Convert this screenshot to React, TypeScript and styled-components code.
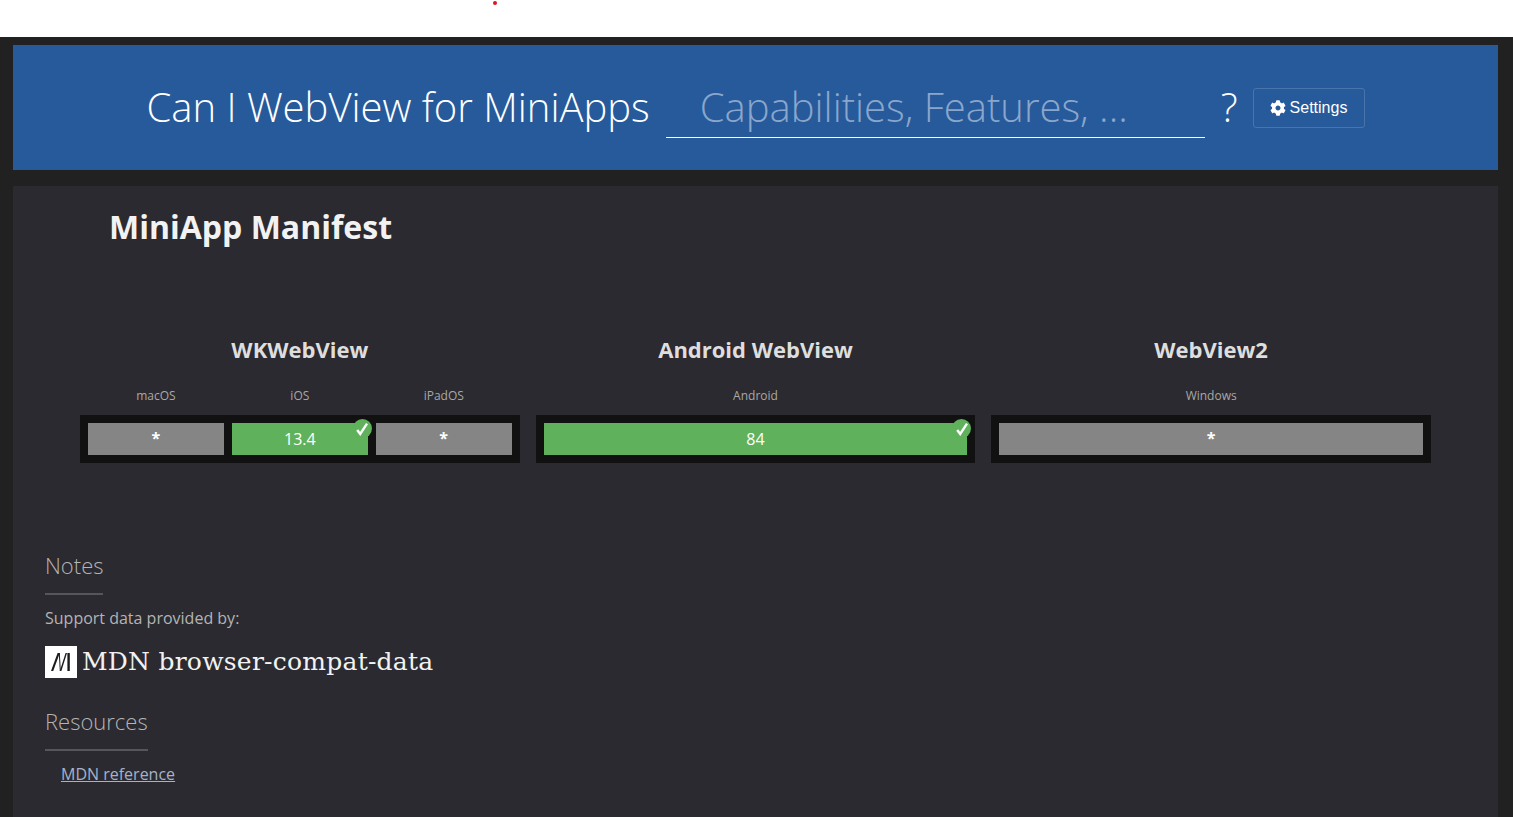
import styled, { createGlobalStyle } from "styled-components";
import { FaCog } from "react-icons/fa";

const GlobalStyle = createGlobalStyle`
  html, body {
    margin: 0;
    height: 100%;
    overflow: hidden;
    background: #212121;
    font-family: "Open Sans", sans-serif;
  }
`;

const engines = [
  {
    name: "WKWebView",
    platforms: [
      { os: "macOS", version: "*", supported: false },
      { os: "iOS", version: "13.4", supported: true },
      { os: "iPadOS", version: "*", supported: false },
    ],
  },
  {
    name: "Android WebView",
    platforms: [{ os: "Android", version: "84", supported: true }],
  },
  {
    name: "WebView2",
    platforms: [{ os: "Windows", version: "*", supported: false }],
  },
];

const App = () => {
  return (
    <>
      <GlobalStyle />
      <TopStrip>
        <RedDot />
      </TopStrip>
      <Page>
        <SearchPanel>
          <Title>Can I WebView for MiniApps</Title>
          <SearchInput placeholder="Capabilities, Features, ..." />
          <Question>?</Question>
          <SettingsButton>
            <FaCog size={16} />
            Settings
          </SettingsButton>
        </SearchPanel>
        <Content>
          <FeatureName>MiniApp Manifest</FeatureName>
          <Engines>
            {engines.map((engine) => (
              <Engine key={engine.name}>
                <EngineName>{engine.name}</EngineName>
                <Labels>
                  {engine.platforms.map((p) => (
                    <Label key={p.os}>{p.os}</Label>
                  ))}
                </Labels>
                <Cells>
                  {engine.platforms.map((p) => (
                    <Cell key={p.os} $supported={p.supported}>
                      {p.version}
                      {p.supported && (
                        <Badge>
                          <svg width="14" height="14" viewBox="0 0 14 14">
                            <path
                              d="M2.2 8 5.2 12 12 1.6"
                              fill="none"
                              stroke="#fff"
                              strokeWidth="2.4"
                            />
                          </svg>
                        </Badge>
                      )}
                    </Cell>
                  ))}
                </Cells>
              </Engine>
            ))}
          </Engines>
          <Section>
            <SectionTitle>Notes</SectionTitle>
            <Note>Support data provided by:</Note>
            <MdnRow>
              <MdnLogo>
                <svg width="20" height="18" viewBox="0 0 20 18">
                  <path d="M0 18 6.6 0H8.8L2.2 18Z" fill="#1b1b1b" />
                  <path d="M7.8 0H8.8L9.8 18H8.8Z" fill="#1b1b1b" />
                  <path d="M8.8 18 14.6 0H16L10.4 18Z" fill="#1b1b1b" />
                  <rect x="16.4" width="2.4" height="18" fill="#1b1b1b" />
                </svg>
              </MdnLogo>
              <MdnText>MDN browser-compat-data</MdnText>
            </MdnRow>
          </Section>
          <ResourcesSection>
            <SectionTitle>Resources</SectionTitle>
            <ResourceLink href="#">MDN reference</ResourceLink>
          </ResourcesSection>
        </Content>
      </Page>
    </>
  );
};

const TopStrip = styled.div`
  position: relative;
  height: 37px;
  background: #fff;
`;

const RedDot = styled.span`
  position: absolute;
  left: 493px;
  top: 1px;
  width: 4px;
  height: 4px;
  border-radius: 50%;
  background: #e0161e;
`;

const Page = styled.div`
  display: flex;
  flex-direction: column;
  gap: 16px;
  padding: 8px 15px 0 13px;
  height: 780px;
  box-sizing: border-box;
`;

const SearchPanel = styled.div`
  display: flex;
  align-items: center;
  justify-content: center;
  flex-shrink: 0;
  height: 125px;
  background: #265a9a;
  color: #fff;
`;

const Title = styled.h1`
  margin: 0;
  padding-bottom: 2px;
  font-size: 40px;
  font-weight: 300;
  white-space: nowrap;
`;

const SearchInput = styled.input`
  width: 539px;
  height: 60px;
  margin: 0 16px;
  padding: 0 34px 2px;
  box-sizing: border-box;
  background: transparent;
  border: 0;
  border-bottom: 1px solid #fff;
  outline: none;
  color: #fff;
  font-family: "Open Sans", sans-serif;
  font-size: 40px;
  font-weight: 300;

  &::placeholder {
    color: #8aa6cc;
    opacity: 1;
  }
`;

const Question = styled.span`
  padding-bottom: 2px;
  font-size: 40px;
  font-weight: 300;
  margin-right: 15px;
`;

const SettingsButton = styled.button`
  display: flex;
  align-items: center;
  gap: 4px;
  width: 112px;
  height: 40px;
  padding: 0 0 0 16px;
  box-sizing: border-box;
  background: transparent;
  border: 1px solid #4a75aa;
  border-radius: 3px;
  color: #fff;
  font-family: "Liberation Sans", sans-serif;
  font-size: 16px;
`;

const Content = styled.main`
  flex: 1;
  background: #2b2a30;
  padding: 0 67px 0 32px;
`;

const FeatureName = styled.h2`
  margin: 0;
  padding: 18px 0 0 64px;
  font-size: 32px;
  line-height: 46px;
  font-weight: 700;
  color: #f2f2f2;
`;

const Engines = styled.div`
  display: grid;
  grid-template-columns: repeat(3, 1fr);
  gap: 16px;
  margin: 84px 0 0 35px;
`;

const Engine = styled.section`
  display: flex;
  flex-direction: column;
`;

const EngineName = styled.h3`
  margin: 0;
  text-align: center;
  font-size: 22px;
  line-height: 30px;
  font-weight: 700;
  color: #dedede;
`;

const Labels = styled.div`
  display: flex;
  gap: 8px;
  padding: 0 8px;
  margin-top: 23px;
`;

const Label = styled.div`
  flex: 1;
  text-align: center;
  font-size: 12px;
  line-height: 17px;
  color: #a8a8a8;
`;

const Cells = styled.div`
  display: flex;
  gap: 8px;
  padding: 8px;
  margin-top: 11px;
  background: #111;
`;

const Cell = styled.div<{ $supported: boolean }>`
  position: relative;
  flex: 1;
  height: 32px;
  text-align: center;
  font-size: 16px;
  font-weight: ${(p) => (p.$supported ? 400 : 700)};
  line-height: ${(p) => (p.$supported ? "33px" : "31px")};
  color: #fff;
  background: ${(p) => (p.$supported ? "#5fb15c" : "#858585")};
`;

const Badge = styled.span`
  position: absolute;
  top: -4px;
  right: -4px;
  display: flex;
  align-items: center;
  justify-content: center;
  width: 19px;
  height: 19px;
  border-radius: 50%;
  background: #5fb15c;
`;

const Section = styled.section`
  margin-top: 86px;
`;

const ResourcesSection = styled.section`
  margin-top: 27px;
`;

const SectionTitle = styled.h4`
  display: table;
  margin: 0;
  padding-bottom: 12px;
  border-bottom: 2px solid #55555a;
  font-size: 22px;
  line-height: 32px;
  font-weight: 300;
  color: #b4b4b4;
`;

const Note = styled.p`
  margin: 12px 0 0;
  font-size: 16px;
  line-height: 22px;
  color: #b4b4b4;
`;

const MdnRow = styled.div`
  display: flex;
  align-items: center;
  gap: 5px;
  margin-top: 17px;
`;

const MdnLogo = styled.span`
  display: flex;
  align-items: center;
  justify-content: center;
  width: 32px;
  height: 32px;
  background: #fff;
`;

const MdnText = styled.span`
  margin-bottom: 2px;
  font-family: "DejaVu Serif", serif;
  font-size: 25px;
  letter-spacing: 0.24px;
  color: #f2f2f2;
`;

const ResourceLink = styled.a`
  display: inline-block;
  margin: 12px 0 0 16px;
  font-size: 16px;
  line-height: 22px;
  color: #a3b3ca;
`;

export default App;
